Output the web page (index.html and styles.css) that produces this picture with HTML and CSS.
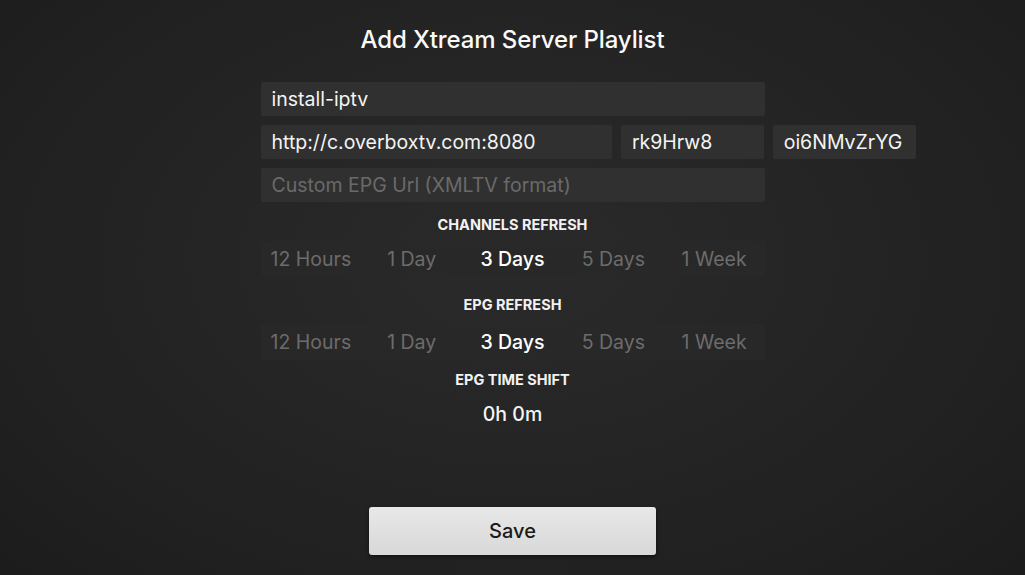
FILE: index.html
```html
<!DOCTYPE html>
<html>
<head>
<meta charset="utf-8">
<link rel="stylesheet" href="styles.css">
</head>
<body>
<main class="screen">
  <h1 class="title">Add Xtream Server Playlist</h1>
  <div class="form">
    <div class="field wide">install-iptv</div>
    <div class="row">
      <div class="field url">http://c.overboxtv.com:8080</div>
      <div class="field user">rk9Hrw8</div>
      <div class="field pass">oi6NMvZrYG</div>
    </div>
    <div class="field wide placeholder">Custom EPG Url (XMLTV format)</div>

    <div class="label l-channels">CHANNELS REFRESH</div>
    <div class="segments">
      <span class="seg">12 Hours</span>
      <span class="seg">1 Day</span>
      <span class="seg active">3 Days</span>
      <span class="seg">5 Days</span>
      <span class="seg">1 Week</span>
    </div>

    <div class="label l-epg">EPG REFRESH</div>
    <div class="segments seg-epg">
      <span class="seg">12 Hours</span>
      <span class="seg">1 Day</span>
      <span class="seg active">3 Days</span>
      <span class="seg">5 Days</span>
      <span class="seg">1 Week</span>
    </div>

    <div class="label l-shift">EPG TIME SHIFT</div>
    <div class="shift">0h 0m</div>
  </div>
  <button class="save">Save</button>
</main>
</body>
</html>
```

FILE: styles.css
```css
html, body {
  margin: 0;
  padding: 0;
  width: 1025px;
  height: 575px;
  overflow: hidden;
}
body {
  font-family: Inter, "Liberation Sans", sans-serif;
  color: #f2f2f2;
  background: radial-gradient(ellipse 70% 80% at 50% 45%, #2a2a2a 0%, #242424 50%, #1c1c1c 100%);
}
.screen {
  height: 575px;
  display: flex;
  flex-direction: column;
  align-items: center;
}
.title {
  margin: 25px 0 0;
  font-size: 24px;
  font-weight: 500;
  line-height: 30px;
  letter-spacing: -0.1px;
  color: #fafafa;
}
.form {
  margin-top: 27px;
  width: 504px;
  display: flex;
  flex-direction: column;
}
.field {
  height: 34px;
  box-sizing: border-box;
  padding: 0 11px;
  display: flex;
  align-items: center;
  background: #303030;
  border-radius: 2px;
  font-size: 19.5px;
  color: #f4f4f4;
  white-space: nowrap;
}
.wide { width: 504px; }
.row {
  display: flex;
  gap: 9px;
  margin: 9px 0;
  width: 656px;
}
.url { width: 352px; }
.user { width: 143px; }
.pass { width: 144px; }
.placeholder { color: #6a6a6a; }
.label {
  text-align: center;
  font-size: 14.5px;
  font-weight: 700;
  color: #f2f2f2;
  line-height: 18px;
}
.l-channels { margin-top: 14px; }
.l-epg { margin-top: 19px; }
.l-shift { margin-top: 11px; }
.segments {
  margin-top: 7px;
  height: 36px;
  display: grid;
  grid-template-columns: repeat(5, 1fr);
  align-items: center;
  background: #282828;
}
.seg-epg { margin-top: 10px; }
.seg {
  text-align: center;
  font-size: 19.5px;
  color: #6c6c6c;
}
.seg.active {
  color: #ffffff;
  font-weight: 500;
}
.shift {
  margin-top: 13px;
  text-align: center;
  font-size: 19.5px;
  font-weight: 500;
  color: #f6f6f6;
}
.save {
  margin-top: auto;
  margin-bottom: 20px;
  width: 287px;
  height: 48px;
  border: none;
  border-radius: 3px;
  background: linear-gradient(#e8e8e8, #d8d8d8);
  box-shadow: 0 2px 4px rgba(0,0,0,0.5);
  font-family: Inter, "Liberation Sans", sans-serif;
  font-size: 20px;
  font-weight: 500;
  color: #1a1a1a;
}
```
